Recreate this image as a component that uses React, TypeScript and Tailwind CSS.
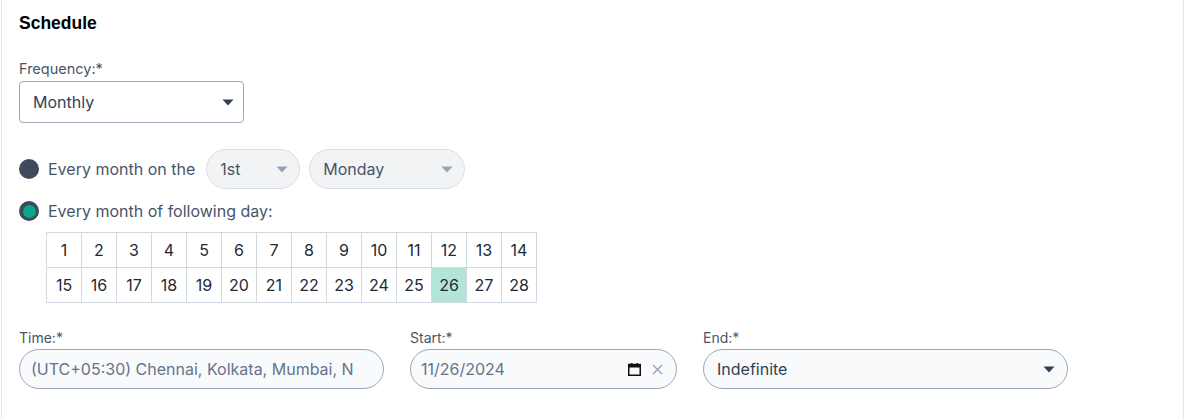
import React from "react";

function Caret({ color, className = "" }: { color: string; className?: string }) {
  return (
    <svg width="12" height="7" viewBox="0 0 12 7" className={className}>
      <path d="M0.5 0.5 L11.5 0.5 L6 6.5 Z" fill={color} />
    </svg>
  );
}

export default function App() {
  const row1 = Array.from({ length: 14 }, (_, i) => i + 1);
  const row2 = Array.from({ length: 14 }, (_, i) => i + 15);
  return (
    <div className="min-h-[419px] bg-white font-['Inter',sans-serif]">
      <div className="ml-px w-[1183px] min-h-[419px] border-x border-[#e2e8f0] pl-[17px] pt-[11px]">
        <div className="h-6 text-[17.5px] leading-6 font-bold text-black font-['Liberation_Sans',Arial,sans-serif]">
          Schedule
        </div>

        <div className="mt-6 text-[14.5px] leading-5 text-[#4a5568]">Frequency:*</div>
        <div className="mt-[2px] flex h-[42px] w-[225px] items-center justify-between rounded-[4px] border border-[#9aa8b8] bg-white pl-[13px] pr-[9px]">
          <span className="text-[16px] text-[#334155]">Monthly</span>
          <Caret color="#334155" />
        </div>

        <div className="mt-[26px] flex h-10 items-center">
          <div className="h-5 w-5 rounded-full bg-[#3d4b5b]" />
          <span className="ml-[9px] text-[16px] text-[#475569]">Every month on the</span>
          <div className="ml-[11px] flex h-10 w-[94px] items-center justify-between rounded-full border border-[#d9dee4] bg-[#f1f3f5] pl-[13px] pr-[11px]">
            <span className="text-[16px] text-[#475569]">1st</span>
            <Caret color="#94a3b8" />
          </div>
          <div className="ml-[9px] flex h-10 w-[156px] items-center justify-between rounded-full border border-[#d9dee4] bg-[#f1f3f5] pl-[13px] pr-[11px]">
            <span className="text-[16px] text-[#475569]">Monday</span>
            <Caret color="#94a3b8" />
          </div>
        </div>

        <div className="mt-[10px] flex h-6 items-center">
          <div className="flex h-5 w-5 items-center justify-center rounded-full bg-[#3d4b5b]">
            <div className="h-[13px] w-[13px] rounded-full bg-[#0fa58a]" />
          </div>
          <span className="ml-[9px] text-[16px] text-[#475569]">Every month of following day:</span>
        </div>

        <div className="ml-[27px] mt-[9px] w-[491px] border-l border-t border-[#d3d9e0]">
          {[row1, row2].map((row, ri) => (
            <div key={ri} className="flex">
              {row.map((d) => (
                <div
                  key={d}
                  className={`flex h-[35px] w-[35px] items-center justify-center border-b border-r border-[#d3d9e0] text-[16px] text-[#1f2937] ${
                    d === 26 ? "bg-[#b2e4da]" : "bg-white"
                  }`}
                >
                  {d}
                </div>
              ))}
            </div>
          ))}
        </div>

        <div className="mt-[27px] flex gap-[26px]">
          <div className="w-[365px]">
            <div className="mb-[3px] text-[14px] leading-4 text-[#4a5568]">Time:*</div>
            <div className="flex h-10 items-center rounded-full border border-[#9aa8b8] bg-[#f8fafc] pl-[11px] pr-[30px]">
              <span className="overflow-hidden whitespace-nowrap text-[16px] text-[#64748b]">
                (UTC+05:30) Chennai, Kolkata, Mumbai, New Delhi
              </span>
            </div>
          </div>
          <div className="w-[267px]">
            <div className="mb-[3px] text-[14px] leading-4 text-[#4a5568]">Start:*</div>
            <div className="flex h-10 items-center rounded-full border border-[#9aa8b8] bg-[#f8fafc] pl-[10px] pr-[13px]">
              <span className="flex-1 whitespace-nowrap text-[16px] text-[#64748b]">11/26/2024</span>
              <svg width="13" height="13" viewBox="0 0 13 13" className="mr-[11px]">
                <rect x="0.75" y="1.5" width="11.5" height="10.75" fill="none" stroke="#111" strokeWidth="1.5" />
                <rect x="0.75" y="1.5" width="11.5" height="3" fill="#111" />
                <rect x="3" y="0" width="1.5" height="2" fill="#111" />
                <rect x="8.5" y="0" width="1.5" height="2" fill="#111" />
              </svg>
              <svg width="11" height="11" viewBox="0 0 11 11">
                <path d="M1 1 L10 10 M10 1 L1 10" stroke="#94a3b8" strokeWidth="1.4" />
              </svg>
            </div>
          </div>
          <div className="w-[365px]">
            <div className="mb-[3px] text-[14px] leading-4 text-[#4a5568]">End:*</div>
            <div className="flex h-10 items-center justify-between rounded-full border border-[#9aa8b8] bg-[#f8fafc] pl-[13px] pr-[12px]">
              <span className="text-[16px] text-[#334155]">Indefinite</span>
              <Caret color="#334155" />
            </div>
          </div>
        </div>
      </div>
    </div>
  );
}
